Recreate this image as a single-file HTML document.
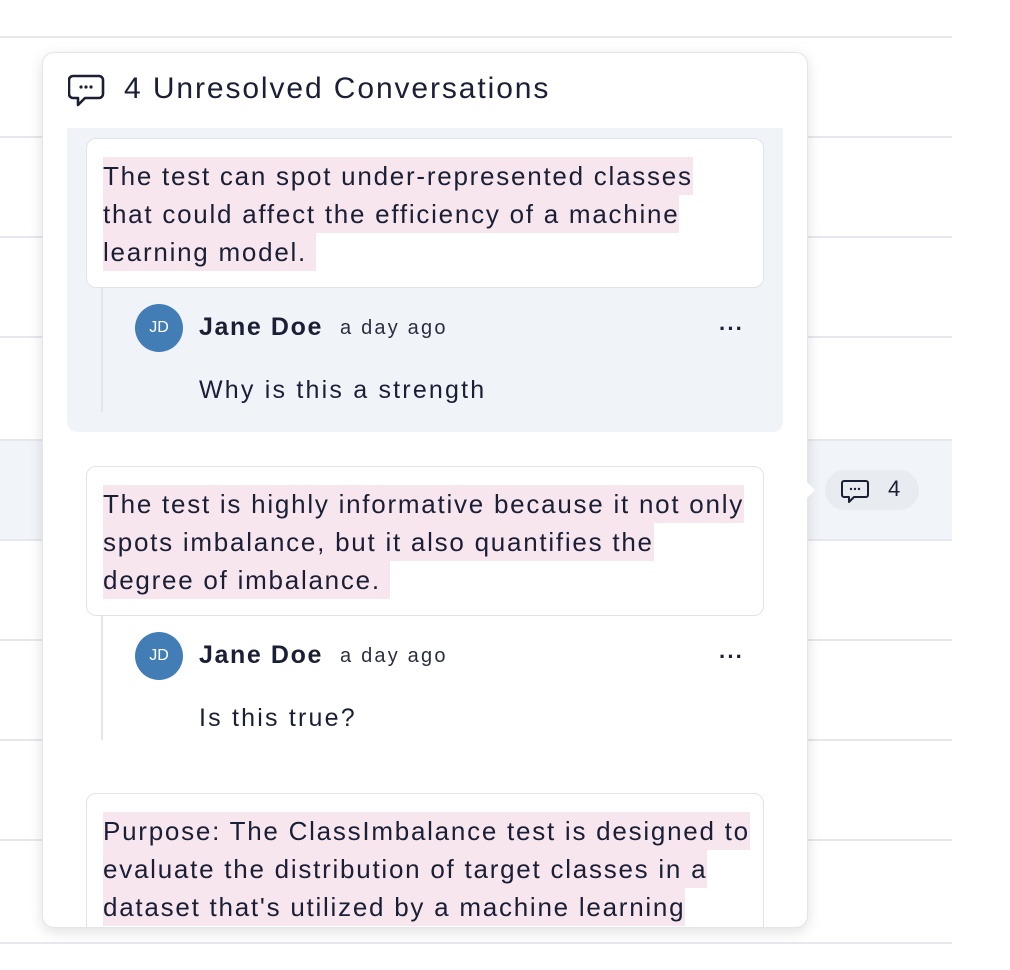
<!DOCTYPE html>
<html><head><style>
body{margin:0;width:1010px;height:970px;background:#fff;position:relative;overflow:hidden;font-family:"Liberation Sans",sans-serif;color:#1a1f36}
.hl{position:absolute;left:0;width:952px;height:2px;background:#e5e8ee}
.pop{position:absolute;left:42px;top:52px;width:764px;height:874px;background:#fff;border:1px solid #e2e6ec;border-radius:12px;box-shadow:0 4px 14px rgba(0,0,0,.12);overflow:hidden}
.a{position:absolute}
.card{position:absolute;left:43px;width:676px;height:148px;border:1px solid #e0e4ea;border-radius:10px;background:#fff}
.ct{position:absolute;left:16px;top:18px;font-size:26px;line-height:38px;white-space:nowrap;letter-spacing:1.75px}
.ct span{background:#f8e6ee;display:inline-block}
.av{position:absolute;width:48px;height:48px;border-radius:50%;background:#437db6;color:#fff;font-size:16px;line-height:48px;text-align:center}
.nm{position:absolute;font-size:25px;font-weight:bold;letter-spacing:1.6px}
.tm{position:absolute;font-size:20px;color:#2a2f40;letter-spacing:2.2px}
.bd{position:absolute;font-size:25px;letter-spacing:2.2px}
.dots{position:absolute;font-size:22px;font-weight:bold;letter-spacing:1px}
.vl{position:absolute;left:58px;width:2px;background:#e2e6ec}
</style></head><body>
<div class="hl" style="top:36px"></div>
<div class="hl" style="top:136px"></div>
<div class="hl" style="top:236px"></div>
<div class="hl" style="top:336px"></div>
<div class="a" style="left:0;top:440px;width:952px;height:100px;background:#f1f4f8"></div>
<div class="hl" style="top:439px"></div>
<div class="hl" style="top:539px"></div>
<div class="hl" style="top:639px"></div>
<div class="hl" style="top:739px"></div>
<div class="hl" style="top:839px"></div>
<div class="hl" style="top:942px"></div>
<div class="a" style="left:825px;top:470px;width:94px;height:40px;border-radius:20px;background:#e8ecf1"></div>
<svg class="a" style="left:840px;top:477px" width="32" height="28" viewBox="0 0 32 28"><path d="M4 4h22a2 2 0 0 1 2 2v12a2 2 0 0 1-2 2H14l-5 5v-5H4a2 2 0 0 1-2-2V6a2 2 0 0 1 2-2z" fill="none" stroke="#1a1f36" stroke-width="2" stroke-linejoin="round"/><circle cx="11" cy="12" r="1.2" fill="#1a1f36"/><circle cx="15" cy="12" r="1.2" fill="#1a1f36"/><circle cx="19" cy="12" r="1.2" fill="#1a1f36"/></svg>
<div class="a" style="left:888px;top:476px;font-size:22px">4</div>
<div class="pop">
 <svg class="a" style="left:25px;top:21px" width="38" height="36" viewBox="0 0 38 36"><path d="M5 2h26a4 4 0 0 1 4 4v14a4 4 0 0 1-4 4H17l-7 7v-7H5a4 4 0 0 1-4-4V6a4 4 0 0 1 4-4z" fill="none" stroke="#1a1f36" stroke-width="2.6" stroke-linejoin="round"/><circle cx="13" cy="13" r="1.6" fill="#1a1f36"/><circle cx="18" cy="13" r="1.6" fill="#1a1f36"/><circle cx="23" cy="13" r="1.6" fill="#1a1f36"/></svg>
 <div class="a" style="left:81px;top:19px;font-size:30px;letter-spacing:1.9px">4 Unresolved Conversations</div>
 <div class="a" style="left:24px;top:75px;width:716px;height:304px;background:#f0f3f8;border-radius:0 0 10px 10px"></div>
 <div class="card" style="top:85px"><div class="ct"><span>The test can spot under-represented classes</span><br><span>that could affect the efficiency of a machine</span><br><span>learning model.&nbsp;</span></div></div>
 <div class="vl" style="top:235px;height:124px"></div>
 <div class="av" style="left:92px;top:251px">JD</div>
 <div class="nm" style="left:156px;top:260px">Jane Doe</div>
 <div class="tm" style="left:297px;top:264px">a day ago</div>
 <div class="dots" style="left:676px;top:263px">···</div>
 <div class="bd" style="left:156px;top:323px">Why is this a strength</div>

 <div class="card" style="top:413px"><div class="ct"><span>The test is highly informative because it not only</span><br><span>spots imbalance, but it also quantifies the</span><br><span>degree of imbalance.&nbsp;</span></div></div>
 <div class="vl" style="top:563px;height:124px"></div>
 <div class="av" style="left:92px;top:579px">JD</div>
 <div class="nm" style="left:156px;top:588px">Jane Doe</div>
 <div class="tm" style="left:297px;top:592px">a day ago</div>
 <div class="dots" style="left:676px;top:591px">···</div>
 <div class="bd" style="left:156px;top:651px">Is this true?</div>

 <div class="card" style="top:740px;height:200px"><div class="ct"><span>Purpose: The ClassImbalance test is designed to</span><br><span>evaluate the distribution of target classes in a</span><br><span>dataset that's utilized by a machine learning</span></div></div>
</div>
<div class="a" style="left:806px;top:481px;width:0;height:0;border-top:9px solid transparent;border-bottom:9px solid transparent;border-left:9px solid #fff"></div>
</body></html>
